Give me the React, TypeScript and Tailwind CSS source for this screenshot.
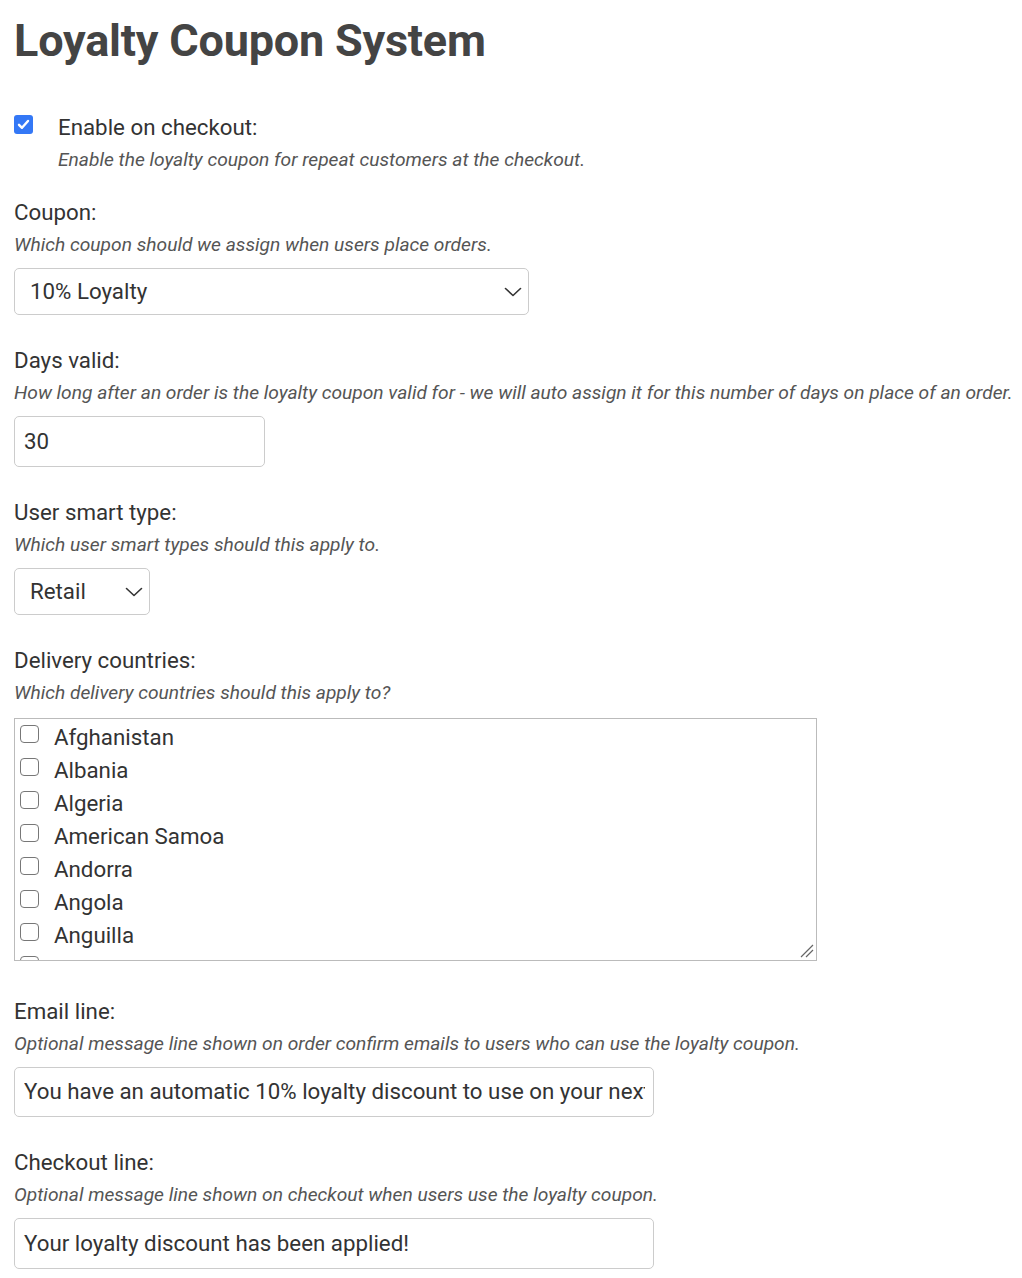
import React from "react";

const countries = [
  "Afghanistan",
  "Albania",
  "Algeria",
  "American Samoa",
  "Andorra",
  "Angola",
  "Anguilla",
  "Antarctica",
  "Antigua and Barbuda",
];

function Chevron() {
  return (
    <svg width="18" height="10" viewBox="0 0 18 10" fill="none" className="shrink-0">
      <path d="M1.5 1.5 L9 8.5 L16.5 1.5" stroke="#333" strokeWidth="1.6" strokeLinecap="round" strokeLinejoin="round" />
    </svg>
  );
}

function Box() {
  return <span className="block w-[19px] h-[18px] rounded-[4px] border-[1.5px] border-[#777] bg-white shrink-0" />;
}

const label = "text-[22.3px] leading-[26px] text-[#333]";
const desc = "text-[19.2px] italic text-[#555] mt-[9px] leading-[22px] whitespace-nowrap";

export default function App() {
  return (
    <div className="bg-white min-h-[1278px] px-[14px] text-[#444]" style={{ fontFamily: "Roboto, 'Noto Sans', sans-serif" }}>
      <h1 className="text-[45px] font-bold leading-none pt-[18px] text-[#444] tracking-[-0.2px]">Loyalty Coupon System</h1>

      <div className="flex mt-[51px]">
        <span className="mt-[1px] w-[19px] h-[19px] rounded-[3px] bg-[#3478f6] flex items-center justify-center shrink-0">
          <svg width="13" height="11" viewBox="0 0 13 11" fill="none">
            <path d="M2 5.8 L5 8.8 L11 2" stroke="white" strokeWidth="2.4" strokeLinecap="round" strokeLinejoin="round" />
          </svg>
        </span>
        <div className="ml-[25px]">
          <div className={label}>Enable on checkout:</div>
          <div className={desc}>Enable the loyalty coupon for repeat customers at the checkout.</div>
        </div>
      </div>

      <div className={"mt-[28px] " + label}>Coupon:</div>
      <div className={desc}>Which coupon should we assign when users place orders.</div>
      <div className="mt-[12px] w-[515px] h-[47px] border border-[#ccc] rounded-[5px] flex items-center justify-between pl-[15px] pr-[6px] text-[22.3px] text-[#333]">
        <span>10% Loyalty</span>
        <Chevron />
      </div>

      <div className={"mt-[32px] " + label}>Days valid:</div>
      <div className={desc}>How long after an order is the loyalty coupon valid for - we will auto assign it for this number of days on place of an order.</div>
      <div className="mt-[12px] w-[251px] h-[51px] border border-[#ccc] rounded-[5px] flex items-center pl-[9px] text-[22.3px] text-[#333]">30</div>

      <div className={"mt-[32px] " + label}>User smart type:</div>
      <div className={desc}>Which user smart types should this apply to.</div>
      <div className="mt-[12px] w-[136px] h-[47px] border border-[#ccc] rounded-[5px] flex items-center justify-between pl-[15px] pr-[6px] text-[22.3px] text-[#333]">
        <span>Retail</span>
        <Chevron />
      </div>

      <div className={"mt-[32px] " + label}>Delivery countries:</div>
      <div className={desc}>Which delivery countries should this apply to?</div>
      <div className="relative mt-[14px] w-[803px] h-[243px] border border-[#bbb] overflow-hidden">
        <div className="pt-[1px] pl-[5px]">
          {countries.map((c) => (
            <div key={c} className="flex items-center h-[33px]">
              <span className="-mt-[5px]"><Box /></span>
              <span className="ml-[15px] text-[22.3px] text-[#333] leading-[26px]">{c}</span>
            </div>
          ))}
        </div>
        <svg className="absolute right-[2px] bottom-[2px]" width="14" height="14" viewBox="0 0 14 14">
          <path d="M1 13 L13 1 M6 13 L13 6" stroke="#666" strokeWidth="1.2" />
        </svg>
      </div>

      <div className={"mt-[37px] " + label}>Email line:</div>
      <div className={desc}>Optional message line shown on order confirm emails to users who can use the loyalty coupon.</div>
      <div className="mt-[12px] w-[640px] h-[50px] border border-[#ccc] rounded-[5px] flex items-center pl-[9px] pr-[8px] text-[22.3px] text-[#333] overflow-hidden whitespace-nowrap">
        <span className="overflow-hidden">You have an automatic 10% loyalty discount to use on your next order!</span>
      </div>

      <div className={"mt-[32px] " + label}>Checkout line:</div>
      <div className={desc}>Optional message line shown on checkout when users use the loyalty coupon.</div>
      <div className="mt-[12px] w-[640px] h-[51px] border border-[#ccc] rounded-[5px] flex items-center pl-[9px] text-[22.3px] text-[#333]">
        Your loyalty discount has been applied!
      </div>
    </div>
  );
}
